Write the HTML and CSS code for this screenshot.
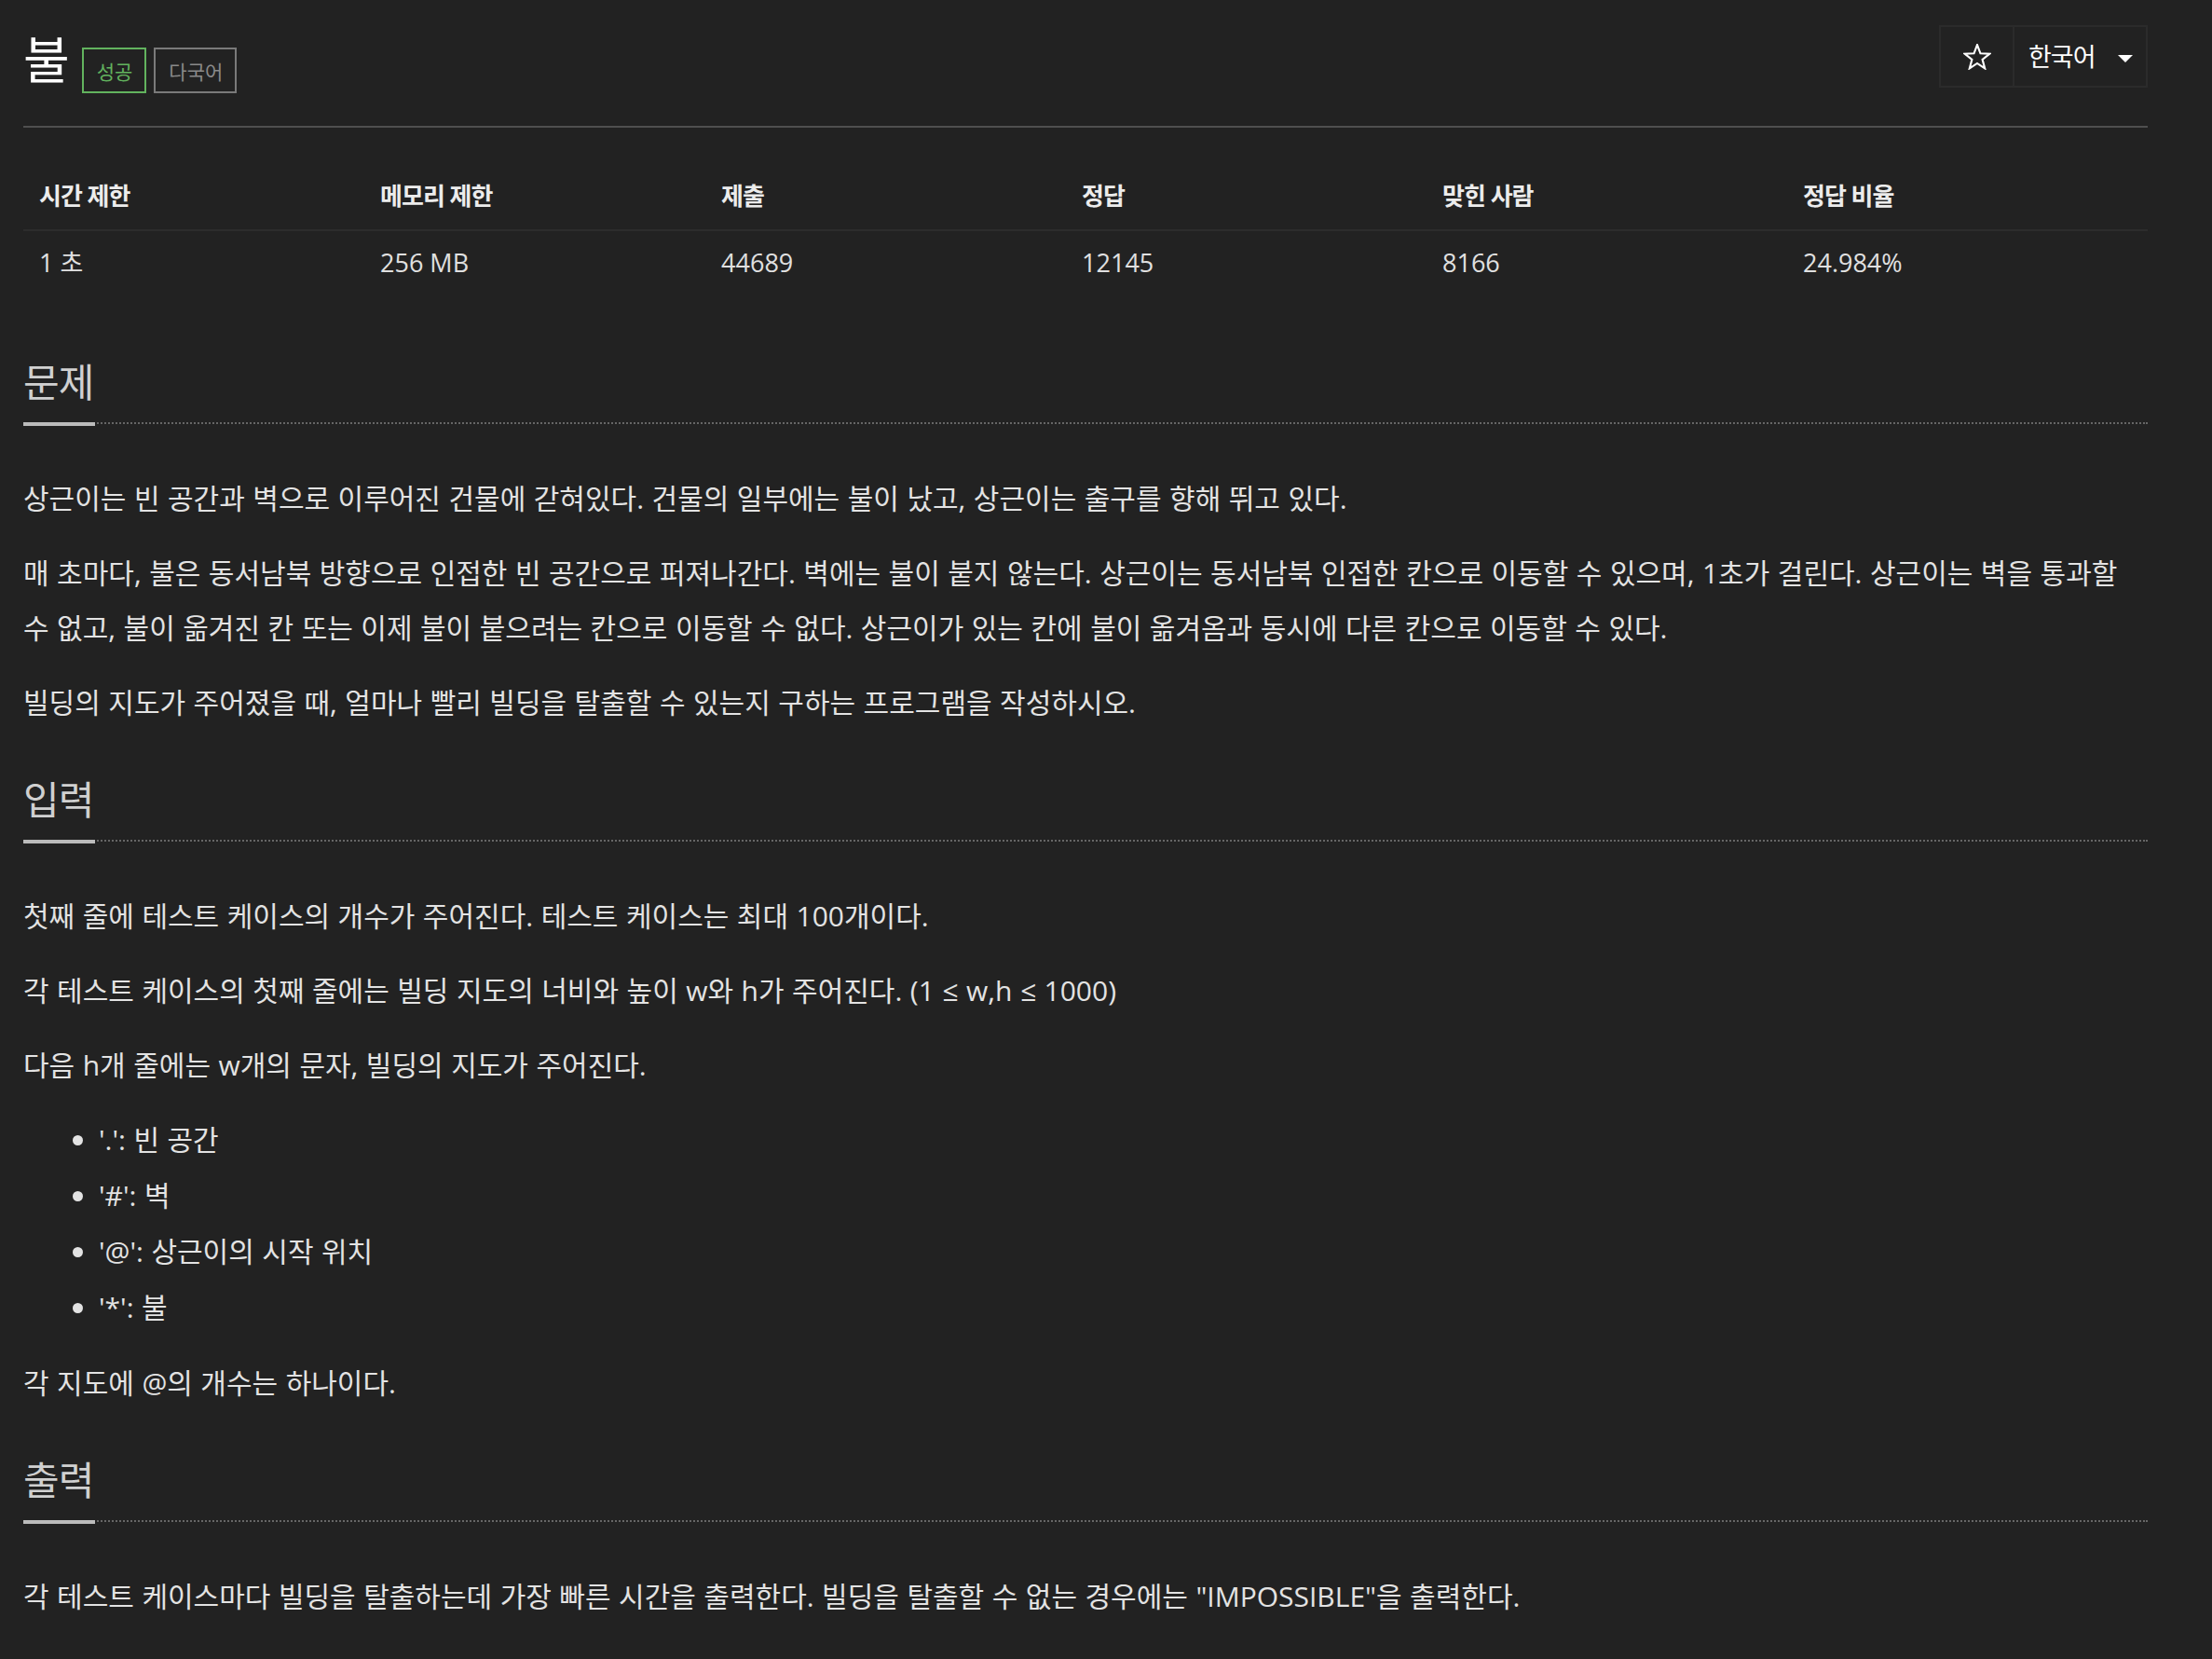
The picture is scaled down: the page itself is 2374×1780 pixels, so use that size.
FILE: index.html
```html
<!DOCTYPE html>
<html lang="ko">
<head>
<meta charset="utf-8">
<title>불</title>
<link rel="stylesheet" href="styles.css">
</head>
<body>
<div class="page">
  <header class="header">
    <div class="title-wrap">
      <h1 class="title">불</h1>
      <span class="badge badge-ok">성공</span>
      <span class="badge badge-multi">다국어</span>
    </div>
    <div class="tools">
      <button class="tool tool-star" type="button">
        <svg class="star" width="30" height="28" viewBox="0 0 28 26" aria-hidden="true">
          <path d="M14 1 L17.23 9.55 L26.36 9.98 L19.23 15.7 L21.64 24.52 L14 19.5 L6.36 24.52 L8.77 15.7 L1.64 9.98 L10.77 9.55 Z" fill="none" stroke="#ffffff" stroke-width="2" stroke-linejoin="miter"/>
        </svg>
      </button>
      <button class="tool tool-lang" type="button">
        <span class="lang-label">한국어</span>
        <span class="caret"></span>
      </button>
    </div>
  </header>

  <table class="info">
    <thead>
      <tr>
        <th class="w16">시간 제한</th>
        <th class="w16">메모리 제한</th>
        <th class="w17">제출</th>
        <th class="w17">정답</th>
        <th class="w17">맞힌 사람</th>
        <th class="w17">정답 비율</th>
      </tr>
    </thead>
    <tbody>
      <tr>
        <td>1 초</td>
        <td>256 MB</td>
        <td>44689</td>
        <td>12145</td>
        <td>8166</td>
        <td>24.984%</td>
      </tr>
    </tbody>
  </table>

  <section class="section">
    <h2 class="headline"><span>문제</span></h2>
    <p>상근이는 빈 공간과 벽으로 이루어진 건물에 갇혀있다. 건물의 일부에는 불이 났고, 상근이는 출구를 향해 뛰고 있다.</p>
    <p>매 초마다, 불은 동서남북 방향으로 인접한 빈 공간으로 퍼져나간다. 벽에는 불이 붙지 않는다. 상근이는 동서남북 인접한 칸으로 이동할 수 있으며, 1초가 걸린다. 상근이는 벽을 통과할 수 없고, 불이 옮겨진 칸 또는 이제 불이 붙으려는 칸으로 이동할 수 없다. 상근이가 있는 칸에 불이 옮겨옴과 동시에 다른 칸으로 이동할 수 있다.</p>
    <p>빌딩의 지도가 주어졌을 때, 얼마나 빨리 빌딩을 탈출할 수 있는지 구하는 프로그램을 작성하시오.</p>
  </section>

  <section class="section">
    <h2 class="headline"><span>입력</span></h2>
    <p>첫째 줄에 테스트 케이스의 개수가 주어진다. 테스트 케이스는 최대 100개이다.</p>
    <p>각 테스트 케이스의 첫째 줄에는 빌딩 지도의 너비와 높이 w와 h가 주어진다. (1 ≤ w,h ≤ 1000)</p>
    <p>다음 h개 줄에는 w개의 문자, 빌딩의 지도가 주어진다.</p>
    <ul class="list">
      <li>'.': 빈 공간</li>
      <li>'#': 벽</li>
      <li>'@': 상근이의 시작 위치</li>
      <li>'*': 불</li>
    </ul>
    <p>각 지도에 @의 개수는 하나이다.</p>
  </section>

  <section class="section">
    <h2 class="headline"><span>출력</span></h2>
    <p>각 테스트 케이스마다 빌딩을 탈출하는데 가장 빠른 시간을 출력한다. 빌딩을 탈출할 수 없는 경우에는 "IMPOSSIBLE"을 출력한다.</p>
  </section>
</div>
</body>
</html>
```

FILE: styles.css
```css
html, body {
  margin: 0;
  padding: 0;
  background: #222222;
}

body {
  font-family: "Open Sans", "Noto Sans CJK KR", sans-serif;
  color: #e3e3e3;
}

.page {
  width: 2280px;
  margin-left: 25px;
}

/* ---------- header ---------- */
.header {
  display: flex;
  justify-content: space-between;
  align-items: flex-start;
  height: 135px;
  border-bottom: 2px solid #4f4f4f;
}

.title-wrap {
  display: flex;
  align-items: baseline;
  margin-top: 32px;
}

.title {
  margin: 0;
  font-size: 54px;
  line-height: 64px;
  font-weight: 400;
  color: #ffffff;
}

.badge {
  display: inline-block;
  font-size: 21px;
  line-height: 25px;
  padding: 12px 13px 8px 14px;
  border: 2px solid;
}

.badge-ok {
  margin-left: 13px;
  color: #62b35e;
  border-color: #62b35e;
}

.badge-multi {
  margin-left: 8px;
  color: #8a8a8a;
  border-color: #7a7a7a;
}

.tools {
  display: flex;
  margin-top: 27px;
  height: 67px;
}

.tool {
  display: flex;
  align-items: center;
  height: 67px;
  box-sizing: border-box;
  background: #222222;
  border: 2px solid #2b2b2b;
  color: #ffffff;
  font-family: inherit;
  padding: 0;
  margin: 0;
}

.tool-star {
  width: 81px;
  justify-content: center;
}

.tool-lang {
  width: 145px;
  margin-left: -2px;
  padding-left: 15px;
}

.lang-label {
  font-size: 27px;
  line-height: 30px;
  letter-spacing: -1px;
}

.caret {
  width: 0;
  height: 0;
  margin-left: 24px;
  margin-top: 4px;
  border-left: 8px solid transparent;
  border-right: 8px solid transparent;
  border-top: 8px solid #ffffff;
}

/* ---------- info table ---------- */
.info {
  width: 100%;
  table-layout: fixed;
  border-collapse: collapse;
  margin: 37px 0 65px;
}

.w16 { width: 16%; }
.w17 { width: 17%; }

.info th {
  text-align: left;
  font-size: 26px;
  line-height: 40px;
  font-weight: 700;
  letter-spacing: -1px;
  color: #ececec;
  padding: 16px 17px;
  border-bottom: 2px solid #2c2c2c;
}

.info td {
  font-size: 27px;
  line-height: 40px;
  color: #e0e0e0;
  padding: 14px 17px 18px;
}

/* ---------- sections ---------- */
.headline {
  display: flex;
  margin: 50px 0 50px;
  border-bottom: 2px dotted #666666;
  font-weight: 400;
}

.headline span {
  display: block;
  font-size: 42px;
  line-height: 50px;
  letter-spacing: -1px;
  color: #d0d0d0;
  padding-bottom: 18px;
  padding-right: 2px;
  border-bottom: 4px solid #bbbbbb;
  margin-bottom: -4px;
}

.section p {
  margin: 0 0 21px;
  font-size: 30px;
  line-height: 59px;
  word-spacing: 0.7px;
}

.list {
  margin: 0 0 21px;
  padding-left: 81px;
  font-size: 30px;
  word-spacing: 0.7px;
}

.list li {
  line-height: 60px;
}
```
